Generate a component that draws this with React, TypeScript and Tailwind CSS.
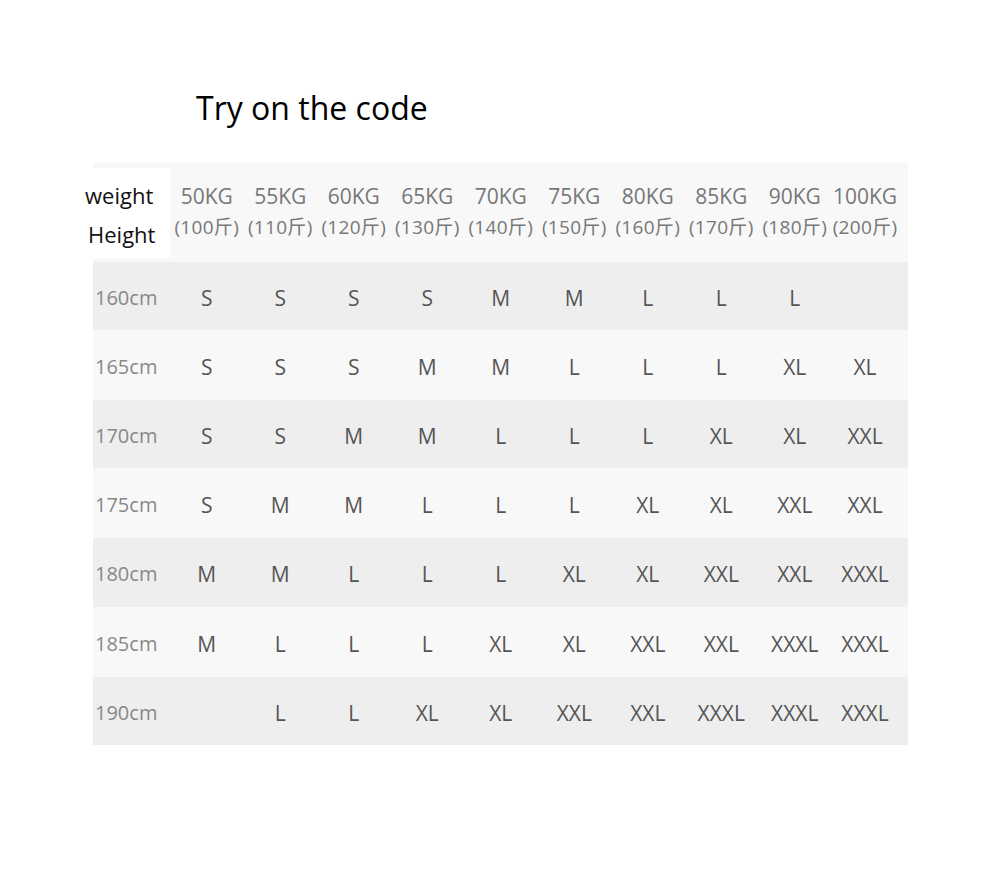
import React from 'react';

const weights = [
  ['50KG', '100'],
  ['55KG', '110'],
  ['60KG', '120'],
  ['65KG', '130'],
  ['70KG', '140'],
  ['75KG', '150'],
  ['80KG', '160'],
  ['85KG', '170'],
  ['90KG', '180'],
  ['100KG', '200'],
];

const rows: { h: string; label: string; sizes: string[] }[] = [
  { h: 'h-[68px] bg-[#eeeeee]', label: '160cm', sizes: ['S', 'S', 'S', 'S', 'M', 'M', 'L', 'L', 'L', ''] },
  { h: 'h-[70px] bg-[#f8f8f8]', label: '165cm', sizes: ['S', 'S', 'S', 'M', 'M', 'L', 'L', 'L', 'XL', 'XL'] },
  { h: 'h-[68px] bg-[#eeeeee]', label: '170cm', sizes: ['S', 'S', 'M', 'M', 'L', 'L', 'L', 'XL', 'XL', 'XXL'] },
  { h: 'h-[70px] bg-[#f8f8f8]', label: '175cm', sizes: ['S', 'M', 'M', 'L', 'L', 'L', 'XL', 'XL', 'XXL', 'XXL'] },
  { h: 'h-[69px] bg-[#eeeeee]', label: '180cm', sizes: ['M', 'M', 'L', 'L', 'L', 'XL', 'XL', 'XXL', 'XXL', 'XXXL'] },
  { h: 'h-[70px] bg-[#f8f8f8]', label: '185cm', sizes: ['M', 'L', 'L', 'L', 'XL', 'XL', 'XXL', 'XXL', 'XXXL', 'XXXL'] },
  { h: 'h-[68px] bg-[#eeeeee]', label: '190cm', sizes: ['', 'L', 'L', 'XL', 'XL', 'XXL', 'XXL', 'XXXL', 'XXXL', 'XXXL'] },
];

const grid = 'grid grid-cols-[77px_repeat(9,73.5px)_67px_1fr]';

export default function App() {
  return (
    <div className="w-[1000px] h-[895px] bg-white font-['Open_Sans','Noto_Sans_CJK_SC',sans-serif]">
      {/* title */}
      <div className="pt-[86px] pl-[196px] text-[32px] leading-[44px] text-black">Try on the code</div>

      <div className="ml-[93px] mt-[32px] w-[815px]">
        {/* header */}
        <div className={`${grid} h-[100px] bg-[#f8f8f8]`}>
          <div className="-ml-[13px] mt-[6px] mb-[4px] w-[90px] bg-white flex flex-col justify-center pt-[4px] pl-[5px] text-[22px] leading-[39px] text-[#111]">
            <span>weight</span>
            <span className="pl-[3px]">Height</span>
          </div>
          {weights.map(([kg, jin]) => (
            <div key={kg} className="flex flex-col items-center justify-center pb-[2px] text-[#777]">
              <span className="text-[21px] leading-[32px]">{kg}</span>
              <span className="text-[19px] leading-[30px] tracking-[0.3px] whitespace-nowrap">({jin}斤)</span>
            </div>
          ))}
          <div />
        </div>

        {/* rows */}
        {rows.map((r) => (
          <div key={r.label} className={`${grid} ${r.h}`}>
            <div className="flex items-center pl-[2px] pt-[3px] text-[20px] text-[#888]">{r.label}</div>
            {r.sizes.map((s, i) => (
              <div key={i} className="flex items-center justify-center pt-[5px] text-[21px] text-[#555]">
                {s}
              </div>
            ))}
            <div />
          </div>
        ))}
      </div>
    </div>
  );
}
